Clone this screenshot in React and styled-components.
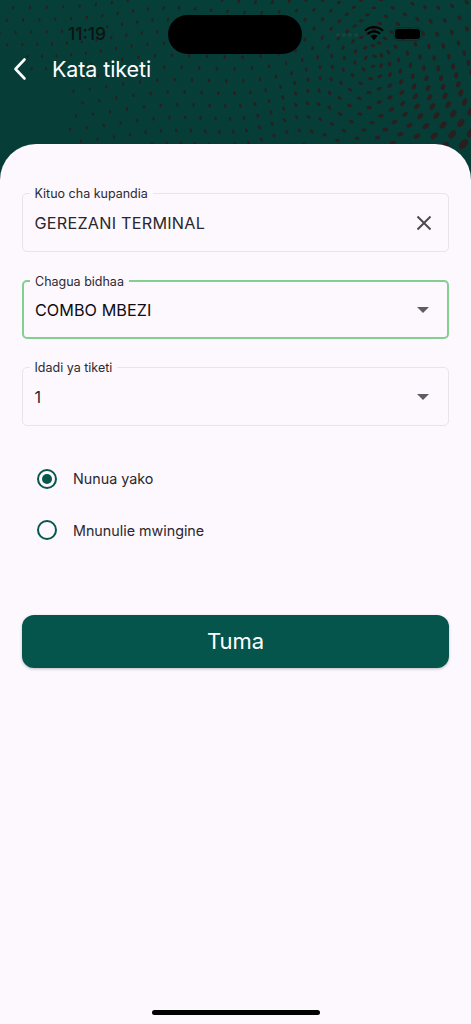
import React from "react";
import styled, { createGlobalStyle } from "styled-components";

const Global = createGlobalStyle`
  html, body { margin: 0; padding: 0; background: #fdf7fe; }
  body { font-family: Inter, "Liberation Sans", sans-serif; }
  * { box-sizing: border-box; }
`;

const Page = styled.div`
  width: 471px;
  height: 1024px;
  display: flex;
  flex-direction: column;
  overflow: hidden;
  position: relative;
  background: #fdf7fe;
`;

const Header = styled.header`
  position: relative;
  height: 180px;
  margin-bottom: -36px;
  flex: none;
  padding: 15px 0 0;
  background: linear-gradient(180deg, #063f38 0%, #073c36 100%);
`;

const Pattern = styled.svg`
  position: absolute;
  inset: 0;
`;

const StatusBar = styled.div`
  position: relative;
  height: 38px;
  display: grid;
  grid-template-columns: 168px 136px 1fr;
  align-items: center;
`;

const Time = styled.span`
  font-size: 17.5px;
  font-weight: 500;
  color: #0a1512;
  padding-left: 68px;
  margin-top: -2px;
`;

const Island = styled.div`
  width: 134px;
  height: 39px;
  border-radius: 20px;
  background: #000;
`;

const StatusIcons = styled.div`
  display: flex;
  align-items: center;
  padding-left: 62px;
  gap: 9px;
  margin-top: -2px;
`;

const Signal = styled.div`
  display: flex;
  gap: 2px;
  margin-left: -30px;
  margin-right: -3px;
  margin-top: 3px;
  opacity: 0.16;
`;

const SignalDot = styled.span`
  width: 4px;
  height: 4px;
  border-radius: 50%;
  background: #5d6a66;
`;

const Battery = styled.div`
  width: 29px;
  height: 14px;
  border-radius: 5px;
  border: 1px solid #0e2f2a;
  padding: 1px;
  &::before {
    content: "";
    display: block;
    height: 100%;
    border-radius: 3px;
    background: #000;
  }
`;

const Nav = styled.div`
  position: relative;
  display: flex;
  align-items: center;
  gap: 19px;
  padding-left: 11px;
  height: 32px;
`;

const Title = styled.h1`
  margin: 0;
  font-size: 21.5px;
  font-weight: 400;
  color: #fff;
  letter-spacing: -0.1px;
`;

const Sheet = styled.main`
  position: relative;
  flex: 1;
  display: flex;
  flex-direction: column;
  background: #fdf7fe;
  border-radius: 36px 36px 0 0;
  padding: 49px 22px 0;
`;

const Fields = styled.div`
  display: flex;
  flex-direction: column;
  gap: 28px;
`;

const Box = styled.div`
  position: relative;
  height: 59px;
  border-radius: 5px;
  border: ${(p) => (p.$focused ? "2px solid #83cf8f" : "1.5px solid #e8e4ea")};
  display: flex;
  align-items: center;
  justify-content: space-between;
  padding: 0 ${(p) => (p.$focused ? "15.5px" : "16px")} 0 ${(p) => (p.$focused ? "11px" : "11.5px")};
`;

const Legend = styled.span`
  position: absolute;
  top: ${(p) => (p.$focused ? "-7.5px" : "-7px")};
  left: ${(p) => (p.$focused ? "6px" : "6.5px")};
  padding: 0 5px;
  font-size: 12.5px;
  line-height: 13px;
  color: #2c2a30;
  background: #fdf7fe;
`;

const Value = styled.span`
  font-size: 16.2px;
  letter-spacing: ${(p) => p.$spacing || "0"};
  color: ${(p) => (p.$strong ? "#0d0c10" : "#29272c")};
`;

const Caret = styled.span`
  width: 0;
  height: 0;
  margin-right: 3px;
  border-left: 6px solid transparent;
  border-right: 6px solid transparent;
  border-top: 6px solid #5f5d63;
`;

const Radios = styled.div`
  display: flex;
  flex-direction: column;
  gap: 31.5px;
  padding: 42.5px 0 0 15px;
`;

const RadioRow = styled.label`
  display: flex;
  align-items: center;
  gap: 16px;
  height: 20px;
  font-size: 14.3px;
  color: #29272c;
`;

const RadioDot = styled.span`
  width: 20px;
  height: 20px;
  border-radius: 50%;
  border: 2.3px solid #07574d;
  display: flex;
  align-items: center;
  justify-content: center;
  &::after {
    content: "";
    width: 10px;
    height: 10px;
    border-radius: 50%;
    background: ${(p) => (p.$on ? "#07574d" : "transparent")};
  }
`;

const Submit = styled.button`
  margin-top: 74.5px;
  height: 53.5px;
  width: 100%;
  border: none;
  border-radius: 12px;
  background: #05554c;
  color: #fff;
  font-family: inherit;
  font-size: 22px;
  font-weight: 400;
  box-shadow: 0 1px 3px rgba(0, 0, 0, 0.25);
`;

const HomeBar = styled.div`
  width: 168px;
  height: 5px;
  border-radius: 3px;
  background: #000;
  margin: auto auto 9px;
`;

function dots() {
  const out = [];
  const W = 471, H = 150, step = 15.5;
  for (let j = -6; j < 20; j++) {
    for (let i = -8; i < 46; i++) {
      const ox = i * step + (j % 2 ? step / 2 : 0);
      const oy = j * step * 0.8;
      const dx = ox - 372, dy = oy - 62;
      const r = Math.hypot(dx, dy);
      const pull = 0.5 * Math.exp(-r / 75);
      const ang = 0.8 * Math.exp(-r / 90);
      const cos = Math.cos(ang), sin = Math.sin(ang);
      let x = 372 + (dx * cos - dy * sin) * (1 - pull);
      let y = 62 + (dx * sin + dy * cos) * (1 - pull);
      x += 6 * Math.sin(oy / 26 + ox / 70);
      y += 7 * Math.sin(ox / 30) * Math.min(1, Math.max(0, ox) / 300);
      if (x < -4 || x > W + 4 || y < -4 || y > H) continue;
      if (x < 70 && y > 78) continue;
      if (x < 25 && y > 50) continue;
      const edge = Math.hypot(x - 471, y - 150);
      const size = 1.05 + 0.4 * Math.max(0, (x - 60) / 410) + 2.5 * Math.exp(-edge / 50);
      const rot = (Math.atan2(y - 62, x - 372) * 180) / Math.PI + 90;
      out.push(
        <ellipse
          key={`${i}-${j}`}
          cx={x.toFixed(1)}
          cy={y.toFixed(1)}
          rx={(size * 1.6).toFixed(2)}
          ry={size.toFixed(2)}
          transform={`rotate(${rot.toFixed(0)} ${x.toFixed(1)} ${y.toFixed(1)})`}
        />
      );
    }
  }
  return out;
}

const Wifi = () => (
  <svg width="20" height="15" viewBox="0 0 20 15">
    <path d="M10 2.2c3.2 0 6.1 1.2 8.3 3.3l1.4-1.6C17.1 1.4 13.7 0 10 0S2.9 1.4.3 3.9l1.4 1.6C3.9 3.4 6.8 2.2 10 2.2z" fill="#000" />
    <path d="M10 6.6c2 0 3.8.8 5.2 2l1.5-1.6C14.9 5.3 12.6 4.3 10 4.3S5.1 5.3 3.3 7l1.5 1.6c1.4-1.2 3.2-2 5.2-2z" fill="#000" />
    <path d="M10 8.7c-1.4 0-2.6.5-3.6 1.4L10 14.2l3.6-4.1c-1-.9-2.2-1.4-3.6-1.4z" fill="#000" />
  </svg>
);

const Back = () => (
  <svg width="22" height="26" viewBox="0 0 22 26" fill="none">
    <path d="M13.5 3.5 4.5 13l9 9.5" stroke="#fff" strokeWidth="2.6" strokeLinecap="round" strokeLinejoin="round" />
  </svg>
);

const Close = () => (
  <svg width="16" height="16" viewBox="0 0 16 16" fill="none">
    <path d="M1.5 1.5l13 13M14.5 1.5l-13 13" stroke="#4a484d" strokeWidth="1.9" />
  </svg>
);

export default function App() {
  return (
    <Page>
      <Global />
      <Header>
        <Pattern width="471" height="180" fill="#2a1e1e">{dots()}</Pattern>
        <StatusBar>
          <Time>11:19</Time>
          <Island />
          <StatusIcons>
            <Signal>
              <SignalDot />
              <SignalDot />
              <SignalDot />
              <SignalDot />
            </Signal>
            <Wifi />
            <Battery />
          </StatusIcons>
        </StatusBar>
        <Nav>
          <Back />
          <Title>Kata tiketi</Title>
        </Nav>
      </Header>
      <Sheet>
        <Fields>
          <Box>
            <Legend>Kituo cha kupandia</Legend>
            <Value $spacing="0.24px">GEREZANI TERMINAL</Value>
            <Close />
          </Box>
          <Box $focused>
            <Legend $focused>Chagua bidhaa</Legend>
            <Value $strong $spacing="0.05px">COMBO MBEZI</Value>
            <Caret />
          </Box>
          <Box>
            <Legend>Idadi ya tiketi</Legend>
            <Value>1</Value>
            <Caret />
          </Box>
        </Fields>
        <Radios>
          <RadioRow>
            <RadioDot $on />
            Nunua yako
          </RadioRow>
          <RadioRow>
            <RadioDot />
            Mnunulie mwingine
          </RadioRow>
        </Radios>
        <Submit>Tuma</Submit>
        <HomeBar />
      </Sheet>
    </Page>
  );
}
